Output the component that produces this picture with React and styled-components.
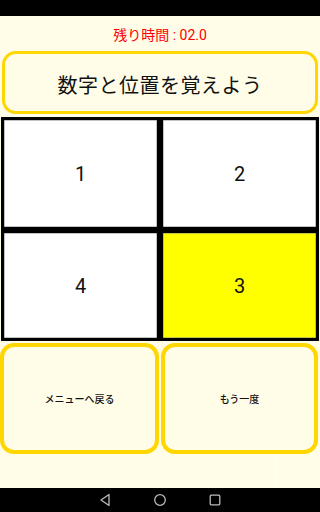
import React from 'react';
import styled, { createGlobalStyle } from 'styled-components';

const GlobalStyle = createGlobalStyle`
  html, body {
    margin: 0;
    padding: 0;
    background: #fffde7;
  }
  body {
    font-family: Roboto, "Noto Sans CJK JP", sans-serif;
  }
`;

const Screen = styled.div`
  width: 100%;
  height: 512px;
  display: flex;
  flex-direction: column;
  background: #fffde7;
  overflow: hidden;
`;

const StatusBar = styled.div`
  height: 16px;
  flex-shrink: 0;
  background: #000;
`;

const Content = styled.div`
  flex: 1;
  display: flex;
  flex-direction: column;
`;

const Timer = styled.div`
  height: 35px;
  display: flex;
  align-items: center;
  justify-content: center;
  color: #ff0000;
  font-size: 14px;
`;

const TitleBox = styled.div`
  height: 63px;
  margin: 0 2px;
  box-sizing: border-box;
  border: 3.5px solid #ffd600;
  border-radius: 14px;
  display: flex;
  align-items: center;
  justify-content: center;
  padding-top: 4px;
  font-size: 20px;
  color: #111;
  letter-spacing: 0.5px;
`;

const Grid = styled.div`
  margin: 3px 1px 0;
  display: grid;
  grid-template-columns: 1fr 1fr;
  grid-template-rows: 113px 111px;
`;

const Cell = styled.div`
  box-sizing: border-box;
  border: 3px solid #000;
  background: ${p => (p.$lit ? '#ffff00' : '#fff')};
  display: flex;
  align-items: center;
  justify-content: center;
  font-size: 20px;
  color: #111;
  box-shadow: inset 0 0 0 0.5px #888;
`;

const ButtonRow = styled.div`
  margin: 2px 2px 0 0;
  display: grid;
  grid-template-columns: 149fr 147fr;
  gap: 2px;
`;

const MenuButton = styled.button`
  height: 111px;
  box-sizing: border-box;
  border: 4px solid #ffd600;
  border-radius: 14px;
  background: #fffde7;
  font-family: inherit;
  font-size: 10px;
  font-weight: 500;
  color: #111;
  padding: 0;
`;

const Footer = styled.div`
  flex: 1;
  display: flex;
  justify-content: flex-end;
  padding-right: 44px;
`;

const Divider = styled.div`
  width: 1px;
  background: #fff;
`;

const NavBar = styled.div`
  height: 24px;
  flex-shrink: 0;
  background: #000;
  display: flex;
  align-items: center;
  justify-content: center;
  gap: 41px;
`;

const NavIcon = styled.svg`
  width: 14px;
  height: 14px;
  display: block;
`;

const cells = [
  { n: 1 },
  { n: 2 },
  { n: 4 },
  { n: 3, lit: true },
];

export default function App() {
  return (
    <>
      <GlobalStyle />
      <Screen>
        <StatusBar />
        <Content>
          <Timer>残り時間 : 02.0</Timer>
          <TitleBox>数字と位置を覚えよう</TitleBox>
          <Grid>
            {cells.map(c => (
              <Cell key={c.n} $lit={c.lit}>
                {c.n}
              </Cell>
            ))}
          </Grid>
          <ButtonRow>
            <MenuButton>メニューへ戻る</MenuButton>
            <MenuButton>もう一度</MenuButton>
          </ButtonRow>
          <Footer>
            <Divider />
          </Footer>
        </Content>
        <NavBar>
          <NavIcon viewBox="0 0 14 14">
            <path d="M11 1.5 L3 7 L11 12.5 Z" fill="none" stroke="#bbb" strokeWidth="1.3" strokeLinejoin="round" />
          </NavIcon>
          <NavIcon viewBox="0 0 14 14">
            <circle cx="7" cy="7" r="5.3" fill="none" stroke="#bbb" strokeWidth="1.3" />
          </NavIcon>
          <NavIcon viewBox="0 0 14 14">
            <rect x="2.2" y="2.2" width="9.6" height="9.6" rx="1" fill="none" stroke="#bbb" strokeWidth="1.3" />
          </NavIcon>
        </NavBar>
      </Screen>
    </>
  );
}
